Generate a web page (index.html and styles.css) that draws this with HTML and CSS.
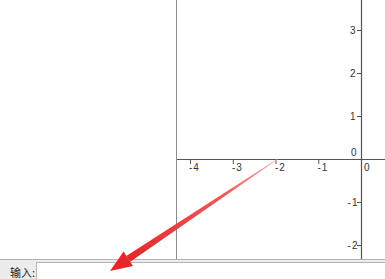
FILE: index.html
```html
<!DOCTYPE html>
<html>
<head>
<meta charset="utf-8">
<link rel="stylesheet" href="styles.css">
</head>
<body>
<div class="app">
  <div class="main">
    <div class="algebra"></div>
    <div class="graphics">
      <svg class="plot" width="208" height="259" viewBox="0 0 208 259">
        <g class="axes">
          <line x1="0" y1="159.5" x2="208" y2="159.5"/>
          <line x1="184.5" y1="0" x2="184.5" y2="259"/>
        </g>
        <g class="ticks">
          <line x1="13.5" y1="159" x2="13.5" y2="164"/>
          <line x1="56.25" y1="159" x2="56.25" y2="164"/>
          <line x1="99" y1="159" x2="99" y2="164"/>
          <line x1="141.75" y1="159" x2="141.75" y2="164"/>
          <line x1="180" y1="30.5" x2="184" y2="30.5"/>
          <line x1="180" y1="73.5" x2="184" y2="73.5"/>
          <line x1="180" y1="116.5" x2="184" y2="116.5"/>
          <line x1="180" y1="202.5" x2="184" y2="202.5"/>
          <line x1="180" y1="245.5" x2="184" y2="245.5"/>
        </g>
        <g class="labels">
          <text x="12" y="170.5" class="neg">-4</text>
          <text x="55" y="170.5" class="neg">-3</text>
          <text x="98" y="170.5" class="neg">-2</text>
          <text x="140.5" y="170.5" class="neg">-1</text>
          <text x="187" y="170.5">0</text>
          <text x="179.5" y="156" class="end">0</text>
          <text x="178.5" y="34" class="end">3</text>
          <text x="178.5" y="77" class="end">2</text>
          <text x="178.5" y="120" class="end">1</text>
          <text x="181.5" y="206" class="end neg">-1</text>
          <text x="181.5" y="249" class="end neg">-2</text>
        </g>
      </svg>
    </div>
  </div>
  <div class="inputbar">
    <span class="label">输入:</span>
    <div class="field"></div>
  </div>
  <svg class="arrow" width="385" height="279" viewBox="0 0 385 279">
    <defs>
      <linearGradient id="shaft" gradientUnits="userSpaceOnUse" x1="277" y1="159.5" x2="128" y2="259">
        <stop offset="0" stop-color="#f7b4b4"/>
        <stop offset="0.35" stop-color="#ee5a5a"/>
        <stop offset="1" stop-color="#e5262b"/>
      </linearGradient>
    </defs>
    <polygon fill="url(#shaft)" points="277.3,159.8 276.7,159.2 126.3,256.0 130.3,261.8"/>
    <polygon fill="#e5262b" points="110,271 123.6,251.6 133.0,266.0"/>
  </svg>
</div>
</body>
</html>
```
FILE: styles.css
```css
html, body {
  margin: 0;
  padding: 0;
  background: #ffffff;
}
.app {
  position: relative;
  width: 385px;
  height: 279px;
  overflow: hidden;
  display: flex;
  flex-direction: column;
  font-family: "Liberation Sans", Arial, sans-serif;
}
.main {
  display: flex;
  height: 260px;
  box-sizing: border-box;
  border-bottom: 1px solid #b0b0b0;
}
.algebra {
  width: 176px;
  background: #ffffff;
  border-right: 1px solid #8c8c8c;
}
.graphics {
  flex: 1;
  background: #ffffff;
  overflow: hidden;
}
.plot {
  display: block;
}
.axes line {
  stroke: #555555;
  stroke-width: 1.2;
}
.ticks line {
  stroke: #555555;
  stroke-width: 1;
}
.labels text {
  font-family: "Liberation Sans", Arial, sans-serif;
  font-size: 10px;
  fill: #333333;
}
.labels text.neg {
  letter-spacing: 1px;
}
.labels text.end {
  text-anchor: end;
}
.inputbar {
  flex: 1;
  display: flex;
  align-items: stretch;
  background: #ececec;
  padding-top: 2px;
}
.label {
  width: 36px;
  box-sizing: border-box;
  padding-left: 10px;
  padding-top: 3px;
  font-family: "Noto Sans CJK SC", sans-serif;
  font-size: 11px;
  line-height: 14px;
  color: #1a1a1a;
  white-space: nowrap;
}
.field {
  flex: 1;
  background: #ffffff;
  border-top: 1px solid #b4b4b4;
  border-left: 1px solid #b4b4b4;
}
.arrow {
  position: absolute;
  left: 0;
  top: 0;
  pointer-events: none;
}
```
